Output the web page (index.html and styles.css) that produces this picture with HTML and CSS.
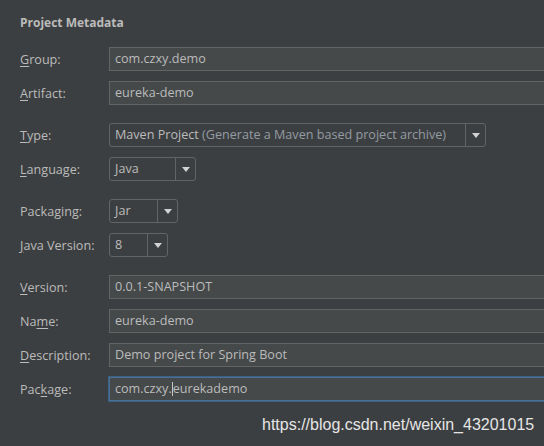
FILE: index.html
```html
<!DOCTYPE html>
<html>
<head>
<meta charset="utf-8">
<link rel="stylesheet" href="styles.css">
</head>
<body>
<div class="panel">
  <div class="title">Project Metadata</div>

  <div class="group">
    <div class="row">
      <span class="lbl"><u>G</u>roup:</span>
      <div class="field">com.czxy.demo</div>
    </div>
    <div class="row">
      <span class="lbl"><u>A</u>rtifact:</span>
      <div class="field">eureka-demo</div>
    </div>
  </div>

  <div class="group">
    <div class="row">
      <span class="lbl"><u>T</u>ype:</span>
      <div class="combo combo-type">
        <span class="combo-text">Maven Project <span class="hint">(Generate a Maven based project archive)</span></span>
        <span class="arrow"><svg width="8" height="5" viewBox="0 0 8 5"><path d="M0 0H8L4 5Z" fill="#d2d2d2"/></svg></span>
      </div>
    </div>
    <div class="row">
      <span class="lbl"><u>L</u>anguage:</span>
      <div class="combo combo-lang">
        <span class="combo-text">Java</span>
        <span class="arrow"><svg width="8" height="5" viewBox="0 0 8 5"><path d="M0 0H8L4 5Z" fill="#d2d2d2"/></svg></span>
      </div>
    </div>
  </div>

  <div class="group">
    <div class="row">
      <span class="lbl">Packa<u>g</u>ing:</span>
      <div class="combo combo-pack">
        <span class="combo-text">Jar</span>
        <span class="arrow"><svg width="8" height="5" viewBox="0 0 8 5"><path d="M0 0H8L4 5Z" fill="#d2d2d2"/></svg></span>
      </div>
    </div>
    <div class="row">
      <span class="lbl"><u>J</u>ava Version:</span>
      <div class="combo combo-java">
        <span class="combo-text">8</span>
        <span class="arrow"><svg width="8" height="5" viewBox="0 0 8 5"><path d="M0 0H8L4 5Z" fill="#d2d2d2"/></svg></span>
      </div>
    </div>
  </div>

  <div class="group">
    <div class="row">
      <span class="lbl"><u>V</u>ersion:</span>
      <div class="field">0.0.1-SNAPSHOT</div>
    </div>
    <div class="row">
      <span class="lbl">Na<u>m</u>e:</span>
      <div class="field">eureka-demo</div>
    </div>
    <div class="row">
      <span class="lbl"><u>D</u>escription:</span>
      <div class="field">Demo project for Spring Boot</div>
    </div>
    <div class="row">
      <span class="lbl">Pac<u>k</u>age:</span>
      <div class="field focused">com.czxy.<span class="caret"></span>eurekademo</div>
    </div>
  </div>
</div>
<div class="watermark">https://blog.csdn.net/weixin_43201015</div>
</body>
</html>
```

FILE: styles.css
```css
html, body {
  margin: 0;
  padding: 0;
  background: #3c3f41;
  overflow: hidden;
}
body {
  width: 544px;
  height: 446px;
  position: relative;
  font-family: "Open Sans", "Noto Sans", sans-serif;
  font-size: 12.6px;
  color: #bbbbbb;
}
.panel {
  padding: 15px 0 0 20px;
  display: flex;
  flex-direction: column;
  gap: 18px;
}
.title {
  font-weight: bold;
  font-size: 12px;
  line-height: 16px;
  margin-bottom: -2px;
}
.group {
  display: flex;
  flex-direction: column;
  gap: 10px;
}
.row {
  display: grid;
  grid-template-columns: 89px 1fr;
  align-items: center;
  height: 24px;
}
.lbl u {
  text-decoration: underline;
  text-underline-offset: 2px;
}
.field {
  box-sizing: border-box;
  height: 24px;
  margin-right: -4px;
  background: #45494a;
  border: 1px solid #646464;
  padding: 0 5px;
  line-height: 22px;
  white-space: nowrap;
}
.field.focused {
  border-color: #4a6f97;
  box-shadow: 0 0 0 1px #3d6185;
}
.caret {
  display: inline-block;
  width: 1px;
  height: 14px;
  background: #c8c8c8;
  vertical-align: -3px;
}
.combo {
  box-sizing: border-box;
  height: 24px;
  border: 1px solid #646464;
  border-radius: 3px;
  display: flex;
  align-items: stretch;
}
.combo-text {
  flex: 1;
  padding: 0 5px;
  line-height: 22px;
  white-space: nowrap;
  overflow: hidden;
}
.hint {
  color: #949ba2;
}
.arrow {
  width: 19px;
  border-left: 1px solid #646464;
  display: flex;
  align-items: center;
  justify-content: center;
}
.combo-type { width: 377px; }
.combo-lang { width: 87px; }
.combo-pack { width: 69px; }
.combo-java { width: 59px; }
.watermark {
  position: absolute;
  left: 262px;
  top: 416px;
  font-family: "Liberation Sans", Arial, sans-serif;
  font-size: 16px;
  color: #e6e6e6;
  white-space: nowrap;
}
```
